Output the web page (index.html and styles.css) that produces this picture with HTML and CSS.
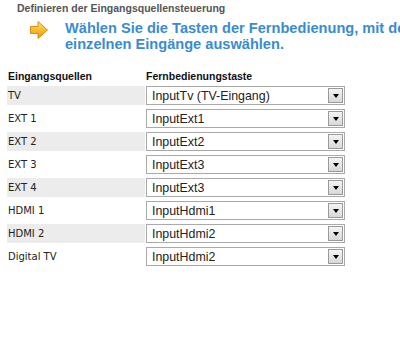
FILE: index.html
```html
<!DOCTYPE html>
<html lang="de">
<head>
  <meta charset="UTF-8">
  <title>Eingangsquellensteuerung</title>
  <link rel="stylesheet" href="styles.css">
</head>
<body>
  <div class="page">
    <div class="title">Definieren der Eingangsquellensteuerung</div>
    <div class="intro">
      <svg class="arrow" width="20" height="20" viewBox="0 0 20 20">
        <defs>
          <linearGradient id="ag" x1="0" y1="0" x2="0" y2="1">
            <stop offset="0" stop-color="#fde58a"/>
            <stop offset="0.5" stop-color="#f7bb2c"/>
            <stop offset="1" stop-color="#e99a10"/>
          </linearGradient>
        </defs>
        <path d="M1.5 6.5 H9 V1.5 L18.5 10 L9 18.5 V13.5 H1.5 Z" fill="url(#ag)" stroke="#d98a12" stroke-width="1" stroke-linejoin="round"/>
      </svg>
      <div class="lead">Wählen Sie die Tasten der Fernbedienung, mit der<br>einzelnen Eingänge auswählen.</div>
    </div>

    <table class="inputs">
      <tr>
        <th class="label">Eingangsquellen</th>
        <th>Fernbedienungstaste</th>
      </tr>
      <tr class="odd">
        <td class="label"><span>TV</span></td>
        <td><div class="combo"><span class="value">InputTv (TV-Eingang)</span><span class="drop"><i></i></span></div></td>
      </tr>
      <tr>
        <td class="label"><span>EXT 1</span></td>
        <td><div class="combo"><span class="value">InputExt1</span><span class="drop"><i></i></span></div></td>
      </tr>
      <tr class="odd">
        <td class="label"><span>EXT 2</span></td>
        <td><div class="combo"><span class="value">InputExt2</span><span class="drop"><i></i></span></div></td>
      </tr>
      <tr>
        <td class="label"><span>EXT 3</span></td>
        <td><div class="combo"><span class="value">InputExt3</span><span class="drop"><i></i></span></div></td>
      </tr>
      <tr class="odd">
        <td class="label"><span>EXT 4</span></td>
        <td><div class="combo"><span class="value">InputExt3</span><span class="drop"><i></i></span></div></td>
      </tr>
      <tr>
        <td class="label"><span>HDMI 1</span></td>
        <td><div class="combo"><span class="value">InputHdmi1</span><span class="drop"><i></i></span></div></td>
      </tr>
      <tr class="odd">
        <td class="label"><span>HDMI 2</span></td>
        <td><div class="combo"><span class="value">InputHdmi2</span><span class="drop"><i></i></span></div></td>
      </tr>
      <tr>
        <td class="label"><span>Digital TV</span></td>
        <td><div class="combo"><span class="value">InputHdmi2</span><span class="drop"><i></i></span></div></td>
      </tr>
    </table>
  </div>
</body>
</html>
```

FILE: styles.css
```css
body {
  margin: 0;
  background-color: #fff;
  font-family: "Liberation Sans", Arial, sans-serif;
  overflow: hidden;
}

.page {
  width: 400px;
  height: 343px;
  overflow: hidden;
}

.title {
  margin: 2px 0 0 17px;
  font-size: 10.5px;
  font-weight: bold;
  color: #555;
  line-height: 13px;
}

.intro {
  display: flex;
  align-items: flex-start;
  margin-top: 5px;
  white-space: nowrap;
}

.arrow {
  margin: 0 16px 0 29px;
  flex: none;
}

.lead {
  font-size: 14.6px;
  font-weight: bold;
  color: #3a8ccf;
  line-height: 16px;
}

.inputs {
  border-collapse: separate;
  border-spacing: 0 4px;
  margin: 13px 0 0 7px;
  font-family: "DejaVu Sans", Tahoma, sans-serif;
}

.inputs th {
  text-align: left;
  font-family: "Liberation Sans", Arial, sans-serif;
  font-size: 10.5px;
  font-weight: bold;
  color: #111;
  padding: 0 0 0 1px;
  height: 13px;
}

.inputs td {
  padding: 0;
  height: 19px;
}

.label {
  width: 137px;
  font-size: 10px;
  color: #222;
}

.label span {
  display: block;
  padding-left: 1px;
}

.odd .label {
  background-color: #ececec;
}

.combo {
  display: flex;
  align-items: center;
  width: 197px;
  height: 17px;
  margin-left: 1px;
  border: 1px solid #a9a9a9;
  background-color: #fff;
}

.value {
  flex: 1;
  padding-left: 5px;
  font-family: "Liberation Sans", Arial, sans-serif;
  font-size: 12.4px;
  color: #222;
}

.drop {
  display: flex;
  align-items: center;
  justify-content: center;
  width: 13px;
  height: 13px;
  margin-right: 1px;
  border: 1px solid #9a9a9a;
  background: linear-gradient(#f4f4f4, #d8d8d8);
}

.drop i {
  width: 0;
  height: 0;
  border-left: 3px solid transparent;
  border-right: 3px solid transparent;
  border-top: 4px solid #000;
}
```
